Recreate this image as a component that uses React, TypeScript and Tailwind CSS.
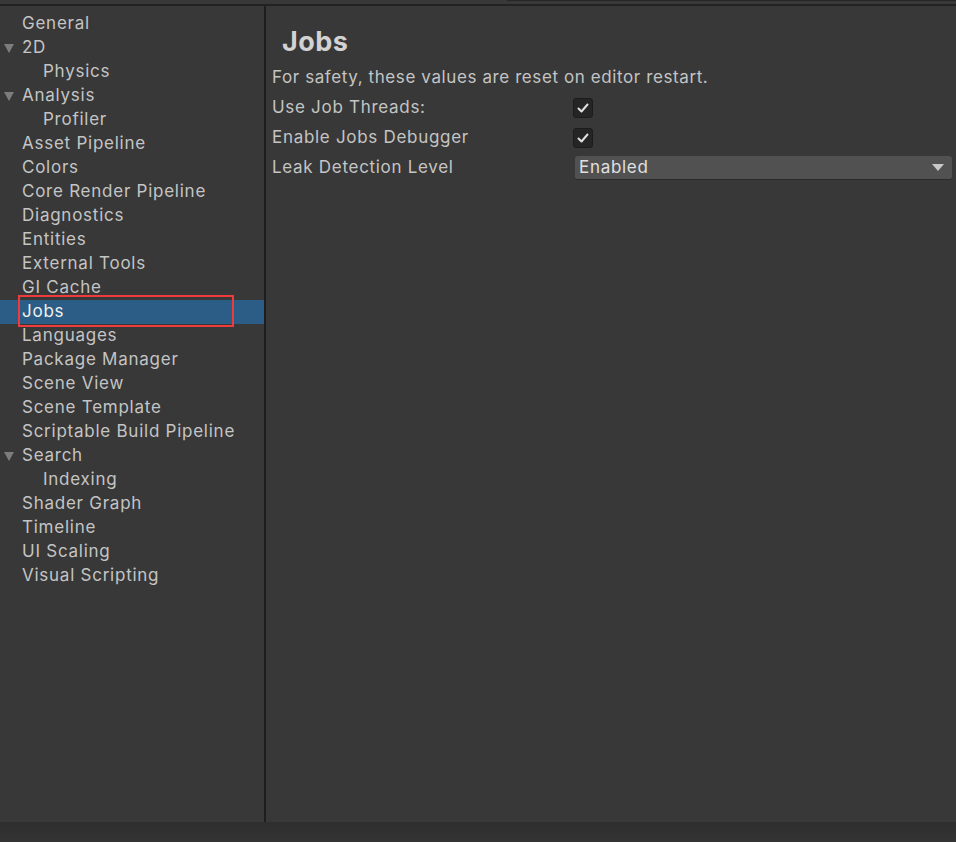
import React from 'react';

type Item = { label: string; depth: number; foldout?: boolean };

const items: Item[] = [
  { label: 'General', depth: 0 },
  { label: '2D', depth: 0, foldout: true },
  { label: 'Physics', depth: 1 },
  { label: 'Analysis', depth: 0, foldout: true },
  { label: 'Profiler', depth: 1 },
  { label: 'Asset Pipeline', depth: 0 },
  { label: 'Colors', depth: 0 },
  { label: 'Core Render Pipeline', depth: 0 },
  { label: 'Diagnostics', depth: 0 },
  { label: 'Entities', depth: 0 },
  { label: 'External Tools', depth: 0 },
  { label: 'GI Cache', depth: 0 },
  { label: 'Jobs', depth: 0 },
  { label: 'Languages', depth: 0 },
  { label: 'Package Manager', depth: 0 },
  { label: 'Scene View', depth: 0 },
  { label: 'Scene Template', depth: 0 },
  { label: 'Scriptable Build Pipeline', depth: 0 },
  { label: 'Search', depth: 0, foldout: true },
  { label: 'Indexing', depth: 1 },
  { label: 'Shader Graph', depth: 0 },
  { label: 'Timeline', depth: 0 },
  { label: 'UI Scaling', depth: 0 },
  { label: 'Visual Scripting', depth: 0 },
];

const Check = () => (
  <div className="w-[20px] h-[20px] rounded-[3px] bg-[#252525] border border-[#1c1c1c] flex items-center justify-center">
    <svg width="14" height="14" viewBox="0 0 14 14">
      <path d="M2.5 7.5 L5.5 10.5 L11.5 3.5" fill="none" stroke="#e0e0e0" strokeWidth="2" strokeLinecap="round" strokeLinejoin="round" />
    </svg>
  </div>
);

export default function App() {
  return (
    <div
      className="w-[956px] h-[842px] bg-[#303030] flex flex-col overflow-hidden text-[#c4c4c4]"
      style={{ fontFamily: 'Inter, "Noto Sans", sans-serif' }}
    >
      {/* top strip */}
      <div className="h-[4px] bg-[#383838] flex shrink-0">
        <div className="w-[507px]" />
        <div className="flex-1 border-t border-[#262626]" />
      </div>
      <div className="h-[2px] bg-[#222222] shrink-0" />

      <div className="h-[816px] flex bg-[#383838] shrink-0">
        {/* sidebar */}
        <div className="w-[264px] pt-[6px] shrink-0">
          {items.map((it) => {
            const selected = it.label === 'Jobs';
            return (
              <div
                key={it.label}
                className={`relative h-[24px] flex items-center text-[17px] tracking-[0.75px] ${selected ? 'bg-[#2c5d87] text-[#f0f0f0]' : ''}`}
              >
                {it.foldout && (
                  <svg className="absolute left-[4px] top-[7px]" width="10" height="10" viewBox="0 0 10 10">
                    <path d="M0 1 L10 1 L5 10 Z" fill="#7c7c7c" />
                  </svg>
                )}
                <span className={it.depth ? 'pl-[43px]' : 'pl-[22px]'}>{it.label}</span>
                {selected && (
                  <div className="absolute left-[18px] top-[-5px] w-[216px] h-[32px] border-2 border-[#ef3b3b]" />
                )}
              </div>
            );
          })}
        </div>

        <div className="w-[2px] bg-[#1e1e1e] shrink-0" />

        {/* content */}
        <div className="flex-1 pl-[6px] pr-[4px] tracking-[0.7px]">
          <div className="pl-[10px] pt-[22px] h-[58px] text-[27px] font-bold text-[#d2d2d2] leading-none tracking-[0.5px]">Jobs</div>
          <div className="h-[24px] mt-[2px] flex items-center text-[17px] tracking-[0.6px]">
            For safety, these values are reset on editor restart.
          </div>
          <div className="mt-[3px] h-[30px] flex items-center text-[17px]">
            <span className="w-[301px]">Use Job Threads:</span>
            <Check />
          </div>
          <div className="h-[30px] flex items-center text-[17px]">
            <span className="w-[301px]">Enable Jobs Debugger</span>
            <Check />
          </div>
          <div className="h-[30px] flex items-center text-[17px]">
            <span className="w-[303px]">Leak Detection Level</span>
            <div className="flex-1 h-[24px] rounded-[3px] bg-[#515151] border-b border-[#2a2a2a] flex items-center pl-[4px] pr-[8px] text-[#e0e0e0]">
              <span className="flex-1">Enabled</span>
              <svg width="12" height="8" viewBox="0 0 12 8">
                <path d="M0 0 L12 0 L6 7 Z" fill="#c8c8c8" />
              </svg>
            </div>
          </div>
        </div>
      </div>

      <div className="flex-1 bg-gradient-to-b from-[#2e2e2e] to-[#343434]" />
    </div>
  );
}
